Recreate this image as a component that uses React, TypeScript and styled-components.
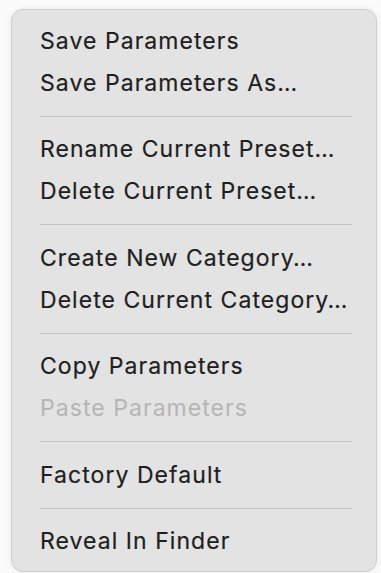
import styled, { createGlobalStyle } from 'styled-components'

const GlobalStyle = createGlobalStyle`
  html, body {
    margin: 0;
    padding: 0;
    background: #fbfbfb;
  }
  body {
    font-family: Inter, 'Liberation Sans', sans-serif;
  }
`

const Page = styled.div`
  width: 381px;
  height: 573px;
  box-sizing: border-box;
  padding: 9px 4px 1px 11px;
  display: flex;
`

const Menu = styled.div`
  flex: 1;
  background: #e3e3e3;
  border: 1px solid #cfcfcf;
  border-radius: 12px;
  box-shadow: 0 0 6px rgba(0, 0, 0, 0.08);
  padding: 10px 24px 9px 28px;
  display: flex;
  flex-direction: column;
`

const Item = styled.div<{ $disabled?: boolean }>`
  height: 42px;
  line-height: 42px;
  font-size: 23px;
  letter-spacing: 1.05px;
  white-space: nowrap;
  color: ${(p) => (p.$disabled ? '#b5b5b5' : '#1f1f1f')};
  -webkit-text-stroke: ${(p) => (p.$disabled ? '0' : '0.2px #1f1f1f')};
`

const Separator = styled.div`
  height: 1px;
  margin: 12px 0 12px 0;
  background: #c5c5c5;
`

type Entry = { label: string; disabled?: boolean } | 'sep'

const entries: Entry[] = [
  { label: 'Save Parameters' },
  { label: 'Save Parameters As…' },
  'sep',
  { label: 'Rename Current Preset…' },
  { label: 'Delete Current Preset…' },
  'sep',
  { label: 'Create New Category…' },
  { label: 'Delete Current Category…' },
  'sep',
  { label: 'Copy Parameters' },
  { label: 'Paste Parameters', disabled: true },
  'sep',
  { label: 'Factory Default' },
  'sep',
  { label: 'Reveal In Finder' },
]

export default function App() {
  return (
    <>
      <GlobalStyle />
      <Page>
        <Menu>
          {entries.map((e, i) =>
            e === 'sep' ? (
              <Separator key={i} />
            ) : (
              <Item key={i} $disabled={e.disabled}>
                {e.label}
              </Item>
            )
          )}
        </Menu>
      </Page>
    </>
  )
}
